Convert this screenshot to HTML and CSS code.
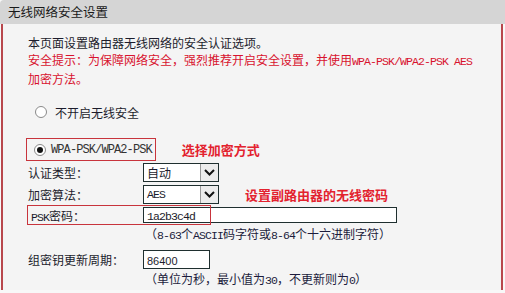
FILE: index.html
```html
<!DOCTYPE html>
<html lang="zh-CN">
  <head>
    <meta charset="utf-8">
    <title>无线网络安全设置</title>
    <link rel="stylesheet" href="styles.css">
  </head>
  <body>

    <div class="panel-title">无线网络安全设置</div>

    <div class="panel-body">
      <!-- Intro -->
      <p class="intro">
        本页面设置路由器无线网络的安全认证选项。<br>
        <span class="warn">安全提示：为保障网络安全，强烈推荐开启安全设置，并使用<span class="mono">WPA-PSK/WPA2-PSK AES</span><br>加密方法。</span>
      </p>

      <!-- Mode choice -->
      <div class="option">
        <span class="radio"></span>
        <span class="option-text">不开启无线安全</span>
      </div>

      <div class="option-row">
        <div class="option picked">
          <span class="radio on"></span>
          <span class="mono">WPA-PSK/WPA2-PSK</span>
        </div>
        <span class="note">选择加密方式</span>
      </div>

      <!-- Settings -->
      <div class="field">
        <label>认证类型：</label>
        <div class="select">
          <span class="value">自动</span>
          <span class="arrow"><svg width="11" height="7" viewBox="0 0 11 7"><path d="M1 1 L5.5 5.5 L10 1" fill="none" stroke="#111" stroke-width="2"/></svg></span>
        </div>
      </div>

      <div class="field">
        <label>加密算法：</label>
        <div class="select">
          <span class="value mono">AES</span>
          <span class="arrow"><svg width="11" height="7" viewBox="0 0 11 7"><path d="M1 1 L5.5 5.5 L10 1" fill="none" stroke="#111" stroke-width="2"/></svg></span>
        </div>
        <span class="note note-wide">设置副路由器的无线密码</span>
      </div>

      <div class="field psk">
        <label><span class="mono">PSK</span>密码：</label>
        <div class="input long"><span class="mono">1a2b3c4d</span></div>
      </div>

      <div class="hint">（<span class="mono">8-63</span>个<span class="mono">ASCII</span>码字符或<span class="mono">8-64</span>个十六进制字符）</div>

      <div class="field renew">
        <label>组密钥更新周期：</label>
        <div class="input short"><span class="num">86400</span></div>
      </div>

      <div class="hint">（单位为秒，最小值为<span class="mono">30</span>，不更新则为<span class="mono">0</span>）</div>
    </div>

  </body>
</html>
```

FILE: styles.css
```css
body {
  margin: 0;
  background-color: #f8f8f8;
  font-family: "Noto Sans CJK SC", "Liberation Sans", sans-serif;
  font-size: 12px;
  color: #1c1c2c;
}

.panel-title {
  height: 24px;
  line-height: 24px;
  padding-left: 8px;
  background-color: #d5d5d5;
  border-top-left-radius: 4px;
  font-size: 12.5px;
  color: #1a1a1a;
}

.panel-body {
  height: 256px;
  margin-left: 1px;
  margin-right: 2px;
  padding: 10px 0 0 25px;
  background-color: #f4f4f4;
  border-left: 2px solid #b8474c;
  border-right: 2px solid #b8474c;
}

.mono {
  font-family: "Liberation Mono", monospace;
  font-size: 11.5px;
  letter-spacing: -0.9px;
}

.intro {
  margin: 0;
  line-height: 17px;
}

.warn {
  color: #d8122e;
}

.option {
  display: flex;
  align-items: center;
  gap: 6px;
  height: 20px;
  margin-top: 15px;
  padding-left: 7px;
}

.option .option-text {
  margin-left: 2px;
}

.option-row {
  display: flex;
  align-items: center;
  margin-top: 16px;
}

.option.picked {
  margin-top: 0;
  margin-left: -2px;
  height: 21px;
  gap: 5px;
  padding-right: 3px;
  border: 1px solid #c8343c;
  color: #333;
}

.option.picked .mono {
  font-size: 12px;
  letter-spacing: -0.9px;
}

.radio {
  width: 10px;
  height: 10px;
  border: 1px solid #8a8a8a;
  border-radius: 50%;
  background-color: #fff;
  display: flex;
  align-items: center;
  justify-content: center;
}

.radio.on::after {
  content: "";
  width: 6px;
  height: 6px;
  border-radius: 50%;
  background-color: #111;
}

.note {
  margin-left: 26px;
  color: #e3222e;
  font-size: 13px;
  font-weight: bold;
}

.field {
  display: flex;
  align-items: center;
  height: 22px;
}

.field label {
  width: 115px;
  flex-shrink: 0;
}

.select {
  display: flex;
  width: 74px;
  height: 17px;
  border: 1px solid #1f2f2f;
  background-color: #fff;
}

.select .value {
  flex: 1;
  padding-left: 3px;
  line-height: 17px;
}

.arrow {
  width: 17px;
  display: flex;
  align-items: center;
  justify-content: center;
  background-color: #ececec;
  border-left: 1px solid #9a9a9a;
}

.psk {
  position: relative;
  height: 20px;
}

.psk::before {
  content: "";
  position: absolute;
  left: -1px;
  top: 0;
  width: 182px;
  height: 18px;
  border: 1px solid #c8343c;
}

.psk label {
  padding-left: 3px;
  width: 112px;
}

.input {
  height: 14px;
  line-height: 14px;
  padding-left: 3px;
  border: 1px solid #1f2f2f;
  background-color: #fff;
}

.input.long {
  width: 249px;
}

.input.short {
  width: 62px;
  height: 17px;
  line-height: 17px;
}

.num {
  font-family: "Liberation Sans", sans-serif;
  font-size: 11px;
}

.renew {
  margin-top: 5px;
}

.hint {
  height: 18px;
  line-height: 18px;
  padding-left: 117px;
  color: #1c1c3c;
}
```
